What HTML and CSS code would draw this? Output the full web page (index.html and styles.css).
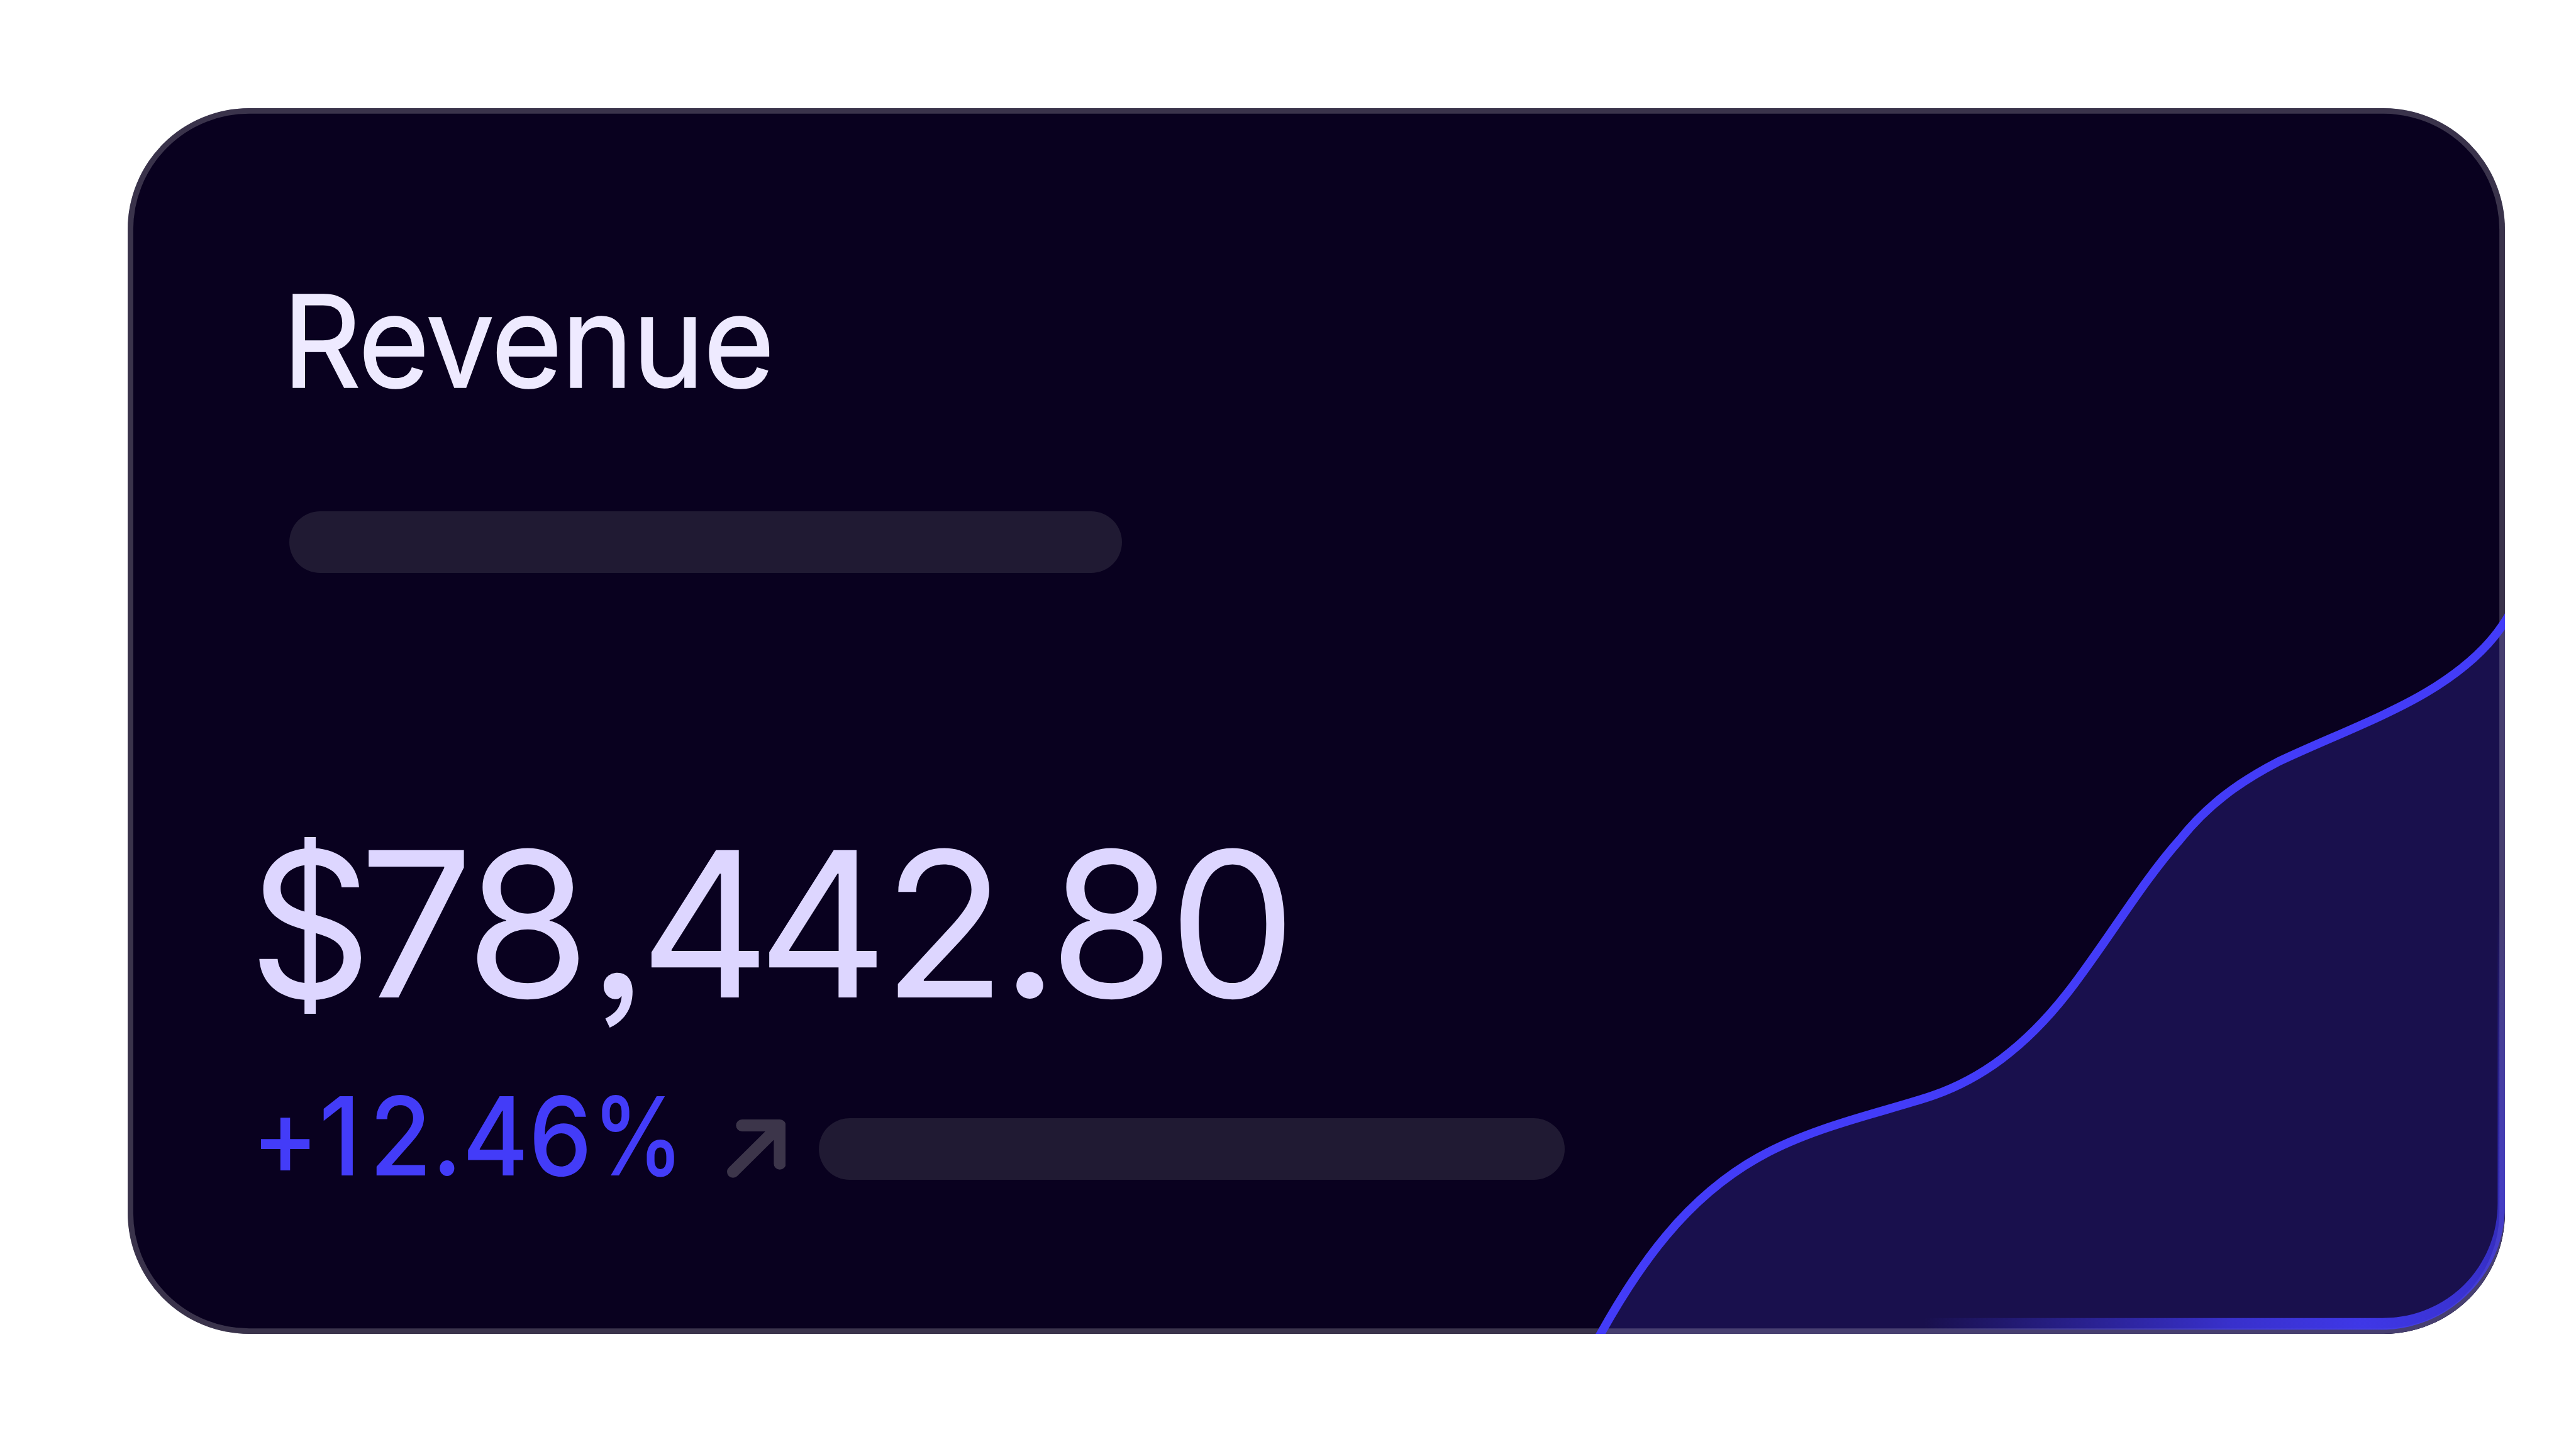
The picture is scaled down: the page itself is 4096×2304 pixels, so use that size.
FILE: index.html
```html
<!DOCTYPE html>
<html lang="en">
<head>
<meta charset="utf-8">
<title>Revenue</title>
<link rel="stylesheet" href="styles.css">
</head>
<body>
<main class="card">
  <svg class="chart" viewBox="297 252 5536 2855" preserveAspectRatio="none" aria-hidden="true">
    <defs>
      <radialGradient id="glow" gradientUnits="userSpaceOnUse" cx="5500" cy="3085" r="1020">
        <stop offset="0" stop-color="#433cf8" stop-opacity=".9"/>
        <stop offset=".3" stop-color="#433cf8" stop-opacity=".74"/>
        <stop offset=".6" stop-color="#433cf8" stop-opacity=".42"/>
        <stop offset="1" stop-color="#433cf8" stop-opacity="0"/>
      </radialGradient>
    </defs>
    <path class="area" d="M3730 3107C3815 2955 3925 2790 4101.8 2692C4230 2621 4400 2587 4503.7 2550.7C4610 2513 4712 2443 4812.5 2315C4906 2195 4985 2058 5076 1955.8C5140 1875 5215 1821 5303.6 1775C5415 1722 5550 1672 5650.5 1612.4C5735 1562 5795 1508 5833 1446V3107Z"/>
    <rect class="outline" x="303.5" y="258.5" width="5523" height="2842" rx="276"/>
    <path fill="url(#glow)" d="M4480 3070H5548C5700 3070 5816 2950 5816 2803V1900H5833V2810C5833 2970 5700 3097 5548 3097H4480Z"/>
    <path class="line" d="M3721 3117L3727 3107C3812 2955 3922 2790 4101.8 2692C4230 2621 4400 2587 4503.7 2550.7C4610 2513 4712 2443 4812.5 2315C4906 2195 4985 2058 5076 1955.8C5140 1875 5215 1821 5303.6 1775C5415 1722 5550 1672 5650.5 1612.4C5735 1562 5795 1508 5833 1448L5845 1428"/>
  </svg>
  <h1 class="title">Revenue</h1>
  <div class="bar bar-wide"></div>
  <p class="amount"><span class="currency">$</span>78<span class="comma">,</span><span class="thousands">4</span>42.80</p>
  <div class="trend">
    <span class="percent">+<span class="one">1</span>2.46<span class="sign">%</span></span>
    <svg class="arrow" viewBox="0 0 137 137" aria-hidden="true"><path d="M14 122L123 14M35 14H123V103"/></svg>
    <div class="bar bar-short"></div>
  </div>
</main>
</body>
</html>
```
FILE: styles.css
```css
* { box-sizing: border-box; margin: 0; }
body {
  width: 4096px;
  height: 2304px;
  padding: 172px 0 0 202.5px;
  background: #fff;
  font-family: Inter, "Liberation Sans", sans-serif;
  overflow: hidden;
}
.card {
  position: relative;
  display: flex;
  flex-direction: column;
  align-items: flex-start;
  width: 3780px;
  height: 1949px;
  border-radius: 193px;
  padding: 245px 0 0 192.5px;
  background: #09011f;
  overflow: hidden;
}
.chart { position: absolute; inset: 0; width: 100%; height: 100%; }
.area { fill: #19104d; }
.outline { fill: none; stroke: #fff; stroke-opacity: .2; stroke-width: 13; }
.line { fill: none; stroke: #433cf8; stroke-width: 20; }
.title, .amount, .percent { transform-origin: 0 0; white-space: nowrap; }
.title {
  margin-left: 53.5px;
  font-size: 204px;
  line-height: 250px;
  font-weight: 400;
  letter-spacing: -2.2px;
  color: #eeeaff;
  -webkit-text-stroke: 1.6px #eeeaff;
  transform: scaleX(.955);
}
.bar { flex: none; height: 98px; border-radius: 49px; background: #201a33; }
.bar-wide { width: 1324px; margin: 146px 0 0 65px; }
.amount {
  margin-top: 363px;
  font-size: 322px;
  line-height: 390px;
  letter-spacing: -8.8px;
  color: #ddd6ff;
  font-feature-settings: "ss03";
}
.currency {
  display: inline-block;
  height: 390px;
  vertical-align: top;
  margin-right: -22px;
  clip-path: inset(57px 0 52px 0);
  transform: scaleX(.95);
  transform-origin: 0 0;
}
.comma { margin-left: 5px; }
.thousands { margin-left: -2px; margin-right: -12px; }
.trend { display: flex; margin: 36.5px 0 0 4.5px; }
.percent {
  flex: none;
  width: 687px;
  font-size: 173.5px;
  line-height: 210px;
  font-weight: 500;
  color: #433cf8;
  transform: scaleX(.925);
}
.one { letter-spacing: 15px; }
.sign { display: inline-block; transform: scaleX(.91); transform-origin: 0 0; }
.arrow {
  flex: none;
  width: 93.5px;
  height: 93.5px;
  margin: 79.5px 53px 0 69px;
  fill: none;
  stroke: #3c354a;
  stroke-width: 28;
  stroke-linecap: round;
  stroke-linejoin: round;
}
.bar-short { width: 1186px; margin-top: 77px; }
```
